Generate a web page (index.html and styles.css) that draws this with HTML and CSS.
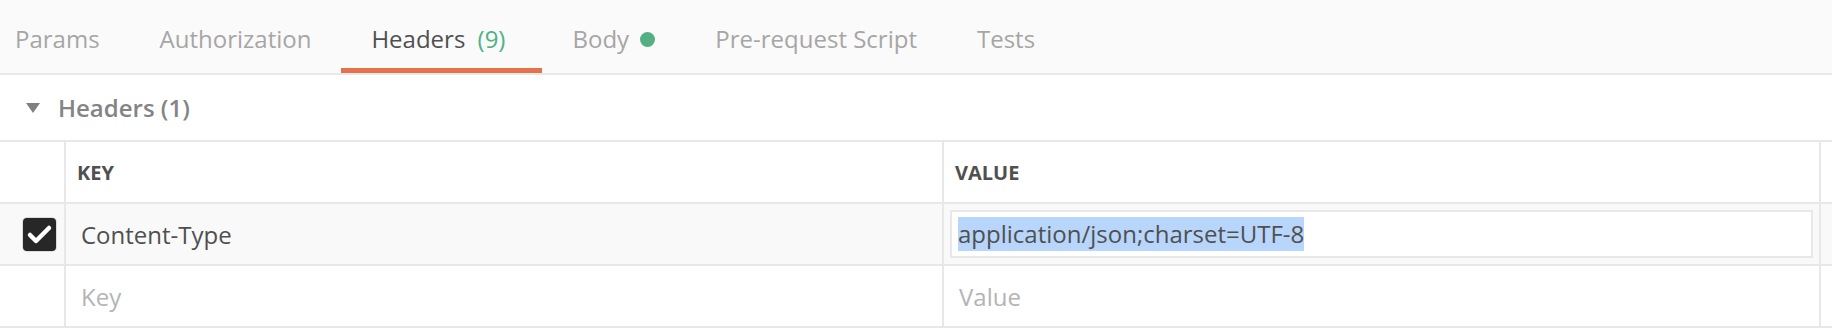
FILE: index.html
```html
<!DOCTYPE html>
<html lang="en">
    <head>
        <meta charset="UTF-8">
        <meta name="viewport" content="width=device-width, initial-scale=1.0">
        <title>Headers</title>
        <link rel="stylesheet" href="styles.css">
    </head>
    <body>
        <div class="tabs">
            <div class="tab">Params</div>
            <div class="tab">Authorization</div>
            <div class="tab active">Headers <span class="count">(9)</span></div>
            <div class="tab">Body <span class="dot"></span></div>
            <div class="tab">Pre-request Script</div>
            <div class="tab">Tests</div>
        </div>

        <div class="section-title">
            <span class="caret"></span>
            <span>Headers (1)</span>
        </div>

        <div class="table">
            <div class="row head">
                <div class="cell check"></div>
                <div class="cell">KEY</div>
                <div class="cell">VALUE</div>
                <div class="cell extra"></div>
            </div>

            <div class="row active">
                <div class="cell check">
                    <span class="checkbox">
                        <svg width="33" height="33" viewBox="0 0 33 33">
                            <polyline points="7,17 13,23 26,10" fill="none" stroke="#fff" stroke-width="4.5" stroke-linecap="round" stroke-linejoin="round"/>
                        </svg>
                    </span>
                </div>
                <div class="cell">
                    <div class="field">Content-Type</div>
                </div>
                <div class="cell">
                    <div class="field boxed"><span class="selected">application/json;charset=UTF-8</span></div>
                </div>
                <div class="cell extra"></div>
            </div>

            <div class="row">
                <div class="cell check"></div>
                <div class="cell">
                    <div class="field placeholder">Key</div>
                </div>
                <div class="cell">
                    <div class="field placeholder">Value</div>
                </div>
                <div class="cell extra"></div>
            </div>
        </div>
    </body>
</html>
```

FILE: styles.css
```css
* {
    box-sizing: border-box;
}

body {
    margin: 0;
    background-color: #ffffff;
    font-family: "Open Sans", "Liberation Sans", sans-serif;
    font-size: 24px;
    color: #505050;
}

.tabs {
    display: flex;
    height: 75px;
    background-color: #fafafa;
    border-bottom: 2px solid #e8e8e8;
}

.tab {
    position: relative;
    display: flex;
    align-items: center;
    padding: 3px 30px 0;
    color: #a6a6a6;
    white-space: pre;
}

.tab:first-child {
    padding-left: 15px;
}

.tab.active {
    padding-left: 30px;
    padding-right: 37px;
    color: #505050;
}

.tab.active::after {
    content: "";
    position: absolute;
    left: 0;
    right: 0;
    bottom: 0;
    height: 5px;
    background-color: #e5714a;
}

.count {
    margin-left: 6px;
    color: #4cb582;
}

.dot {
    display: inline-block;
    width: 15px;
    height: 15px;
    margin-left: 5px;
    margin-top: 3px;
    border-radius: 50%;
    background-color: #54b083;
}

.section-title {
    display: flex;
    align-items: center;
    gap: 18px;
    height: 65px;
    padding-left: 26px;
    font-weight: 600;
    color: #848484;
}

.caret {
    width: 0;
    height: 0;
    border-left: 7px solid transparent;
    border-right: 7px solid transparent;
    border-top: 10px solid #808080;
}

.table {
    border-top: 2px solid #e8e8e8;
}

.row {
    display: grid;
    grid-template-columns: 66px 878px 877px 1fr;
    height: 62px;
    border-bottom: 2px solid #e8e8e8;
}

.row.active {
    background-color: #f9f9f9;
}

.cell {
    display: flex;
    align-items: center;
    border-right: 2px solid #e8e8e8;
}

.cell.extra {
    border-right: none;
}

.head .cell {
    padding-left: 11px;
    font-size: 20px;
    font-weight: 700;
    color: #505050;
}

.check {
    padding-left: 23px;
}

.checkbox {
    display: block;
    width: 33px;
    height: 33px;
    border-radius: 4px;
    background-color: #272727;
    box-shadow: 0 0 0 1px #dcdcdc;
}

.checkbox svg {
    display: block;
}

.field {
    flex: 1;
    display: flex;
    align-items: center;
    height: 48px;
    margin: 0 6px;
    padding: 0 7px;
    border: 2px solid transparent;
}

.field.boxed {
    padding: 0 6px;
    border-color: #e8e8e8;
    background-color: #ffffff;
}

.selected {
    line-height: 34px;
    background-color: #b8d6fb;
}

.placeholder {
    color: #b4b4b4;
}
```
